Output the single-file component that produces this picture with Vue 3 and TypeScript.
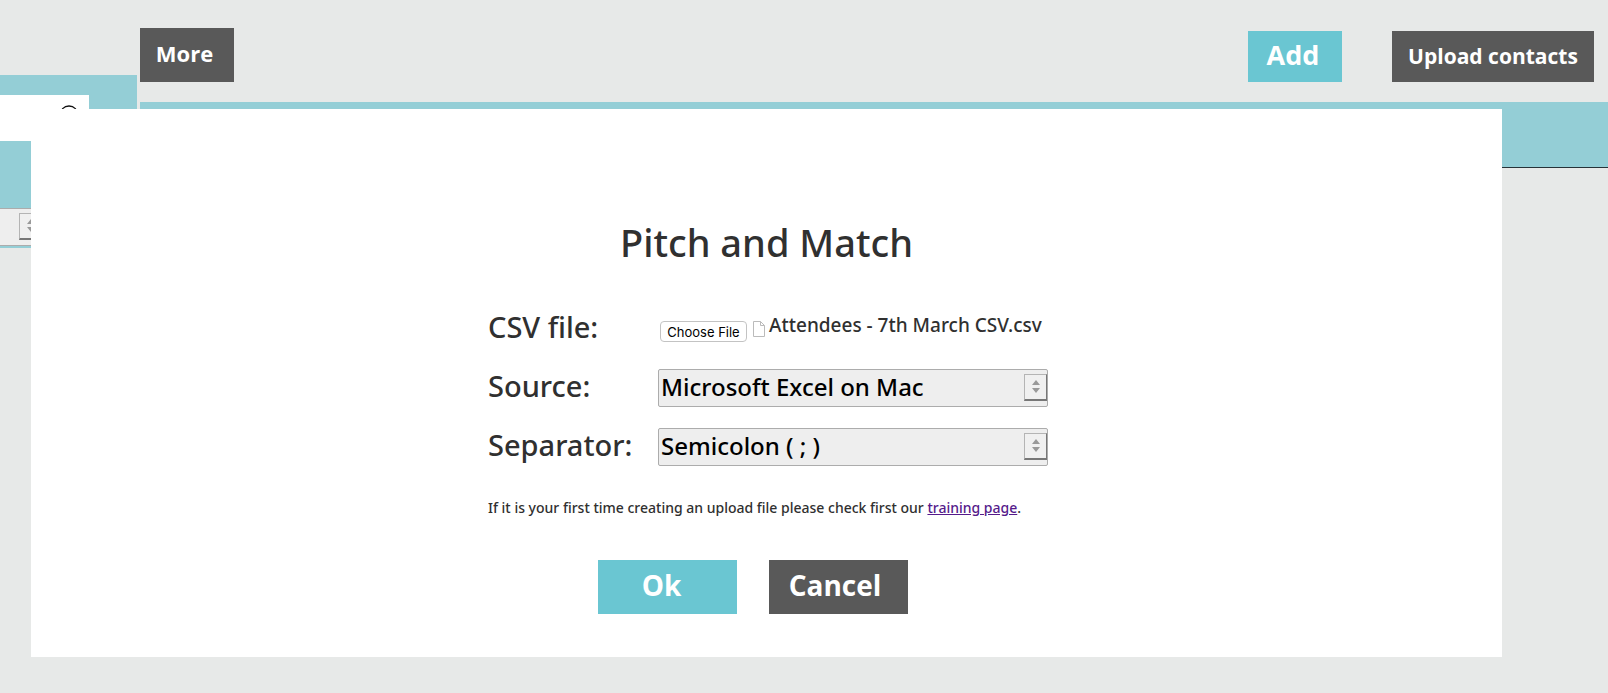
<script setup lang="ts">
import { ref } from 'vue'

const fileName = ref('Attendees - 7th March CSV.csv')
const source = ref('Microsoft Excel on Mac')
const separator = ref('Semicolon ( ; )')
const search = ref('')
const filter = ref('')

const sources: string[] = ['Microsoft Excel on Mac', 'Microsoft Excel on Windows', 'Other']
const separators: string[] = ['Semicolon ( ; )', 'Comma ( , )']

function onFile(event: Event): void {
  const file = (event.target as HTMLInputElement).files?.[0]
  if (file) fileName.value = file.name
}
</script>

<template>
  <div class="page">
    <aside class="sidebar">
      <div class="side-panel">
        <form class="search" @submit.prevent>
          <input v-model="search" class="search-input" type="search" aria-label="Search" />
          <button class="search-button" type="submit" aria-label="Search">
            <svg viewBox="0 0 24 24" width="24" height="24" aria-hidden="true">
              <circle cx="12" cy="10" r="9" fill="none" stroke="#111" stroke-width="1.3" />
              <path d="M18 17l5 6" stroke="#111" stroke-width="2" />
            </svg>
          </button>
        </form>
        <div class="select-wrap side-select">
          <select v-model="filter" aria-label="Filter"><option value=""></option></select>
          <span class="stepper" aria-hidden="true">
            <svg viewBox="0 0 8 14" width="8" height="14"><path d="M0 5l4-5 4 5zM0 8h8l-4 5z" fill="#999" /></svg>
          </span>
        </div>
      </div>
    </aside>

    <main class="main">
      <header class="toolbar">
        <button class="btn dark more" type="button">More</button>
        <button class="btn teal add" type="button">Add</button>
        <button class="btn dark upload" type="button">Upload contacts</button>
      </header>
      <div class="band"></div>
    </main>

    <section class="modal" role="dialog" aria-labelledby="dialog-title">
      <h1 id="dialog-title">Pitch and Match</h1>
      <form class="form" @submit.prevent>
        <div class="row">
          <label for="csv">CSV file:</label>
          <div class="file">
            <input id="csv" type="file" accept=".csv" @change="onFile" />
            <svg class="doc" viewBox="0 0 12 16" width="12" height="16" aria-hidden="true">
              <path d="M.5.5h7l4 4v11H.5zM7.500.5v4h4" fill="#fff" stroke="#bbb" />
            </svg>
            <span class="file-name">{{ fileName }}</span>
          </div>
        </div>
        <div class="row">
          <label for="source">Source:</label>
          <div class="select-wrap">
            <select id="source" v-model="source">
              <option v-for="s in sources" :key="s">{{ s }}</option>
            </select>
            <span class="stepper" aria-hidden="true">
              <svg viewBox="0 0 8 14" width="8" height="14"><path d="M0 5l4-5 4 5zM0 8h8l-4 5z" fill="#999" /></svg>
            </span>
          </div>
        </div>
        <div class="row">
          <label for="separator">Separator:</label>
          <div class="select-wrap">
            <select id="separator" v-model="separator">
              <option v-for="s in separators" :key="s">{{ s }}</option>
            </select>
            <span class="stepper" aria-hidden="true">
              <svg viewBox="0 0 8 14" width="8" height="14"><path d="M0 5l4-5 4 5zM0 8h8l-4 5z" fill="#999" /></svg>
            </span>
          </div>
        </div>
        <p class="note">
          If it is your first time creating an upload file please check first our <a href="#training">training page</a>.
        </p>
        <div class="actions">
          <button class="btn teal action ok" type="submit">Ok</button>
          <button class="btn dark action" type="button">Cancel</button>
        </div>
      </form>
    </section>
  </div>
</template>

<style>
body {
  background: #e7e9e8;
}
</style>

<style scoped>
.page,
.page * {
  box-sizing: border-box;
}
.page {
  position: relative;
  display: flex;
  gap: 3px;
  min-height: 100vh;
  overflow: hidden;
  background: #e7e9e8;
  color: #303030;
  font-family: 'Noto Sans', sans-serif;
  font-weight: 500;
}
.page button,
.page select,
.page input {
  font-family: inherit;
}
.sidebar {
  flex: 0 0 137px;
  padding-top: 75px;
}
.side-panel {
  padding: 20px 0 2px;
  background: #94ced6;
}
.search {
  display: flex;
  width: 89px;
  height: 46px;
  margin-bottom: 67px;
  background: #fff;
}
.search-input {
  flex: 1;
  min-width: 0;
  border: 0;
  padding: 0;
  background: transparent;
}
.search-button {
  display: flex;
  align-items: flex-start;
  width: 24px;
  margin-right: 8px;
  padding: 10px 0 0;
  border: 0;
  background: transparent;
}
.search-button svg {
  display: block;
}
.select-wrap {
  position: relative;
  display: flex;
}
.side-select {
  width: 43px;
}
.select-wrap select {
  width: 100%;
  height: 38px;
  padding: 0 26px 3px 2px;
  appearance: none;
  border: 1px solid #acacac;
  border-radius: 2px;
  background: #eee;
  color: #000;
  font-size: 24px;
  font-weight: 500;
  line-height: 34px;
}
.side-select select {
  border-left: 0;
  border-radius: 0;
}
.stepper {
  position: absolute;
  top: 5px;
  right: 1px;
  display: flex;
  align-items: center;
  justify-content: center;
  width: 23px;
  height: 27px;
  border: 1px solid #b4b4b4;
  border-right: 1px solid #777;
  border-bottom: 2px solid #777;
  background: #f0f0f0;
  pointer-events: none;
}
.main {
  flex: 1;
  min-width: 0;
}
.toolbar {
  display: flex;
  align-items: flex-end;
  height: 102px;
  padding: 0 14px 20px 0;
}
.page .btn {
  border: 0;
  color: #fff;
  font-family: 'Open Sans', sans-serif;
  font-weight: 700;
}
.dark {
  background: #595959;
}
.teal {
  background: #6ac6d2;
}
.more {
  width: 94px;
  height: 54px;
  padding: 0 5px 4px 0;
  font-size: 22px;
}
.add {
  width: 94px;
  height: 51px;
  margin: 0 50px 0 auto;
  padding: 0 4px 4px 0;
  font-size: 27px;
}
.upload {
  width: 202px;
  height: 51px;
  padding: 0 0 2px;
  font-size: 21px;
}
.band {
  height: 66px;
  border-bottom: 1px solid #263338;
  background: #94ced6;
}
.modal {
  position: absolute;
  top: 109px;
  left: 31px;
  right: 106px;
  padding: 105px 0 43px;
  background: #fff;
}
h1 {
  margin: 0;
  font-size: 38px;
  font-weight: 500;
  line-height: 56px;
  text-align: center;
}
.form {
  width: 563px;
  margin: 40px auto 0;
  padding-left: 3px;
}
.row {
  display: grid;
  grid-template-columns: 170px 1fr;
  align-items: center;
  height: 38px;
  margin-bottom: 21px;
}
.row label {
  padding-bottom: 4px;
  font-size: 29px;
  line-height: 34px;
}
.file {
  display: flex;
  align-items: center;
  padding-left: 2px;
}
.file input {
  width: 87px;
  height: 21px;
  margin-top: 5px;
  overflow: hidden;
  color: transparent;
  font-size: 13px;
}
.file input::file-selector-button {
  width: 87px;
  height: 21px;
  margin: 0;
  padding: 0;
  border: 1px solid #c3c3c3;
  border-radius: 4px;
  background: #fff;
  color: #000;
  font: 13px/18px Inter, sans-serif;
}
.doc {
  flex: none;
  margin: 0 4px 0 6px;
}
.file-name {
  font-size: 19px;
  line-height: 28px;
  padding-bottom: 8px;
  white-space: nowrap;
}
.note {
  margin: 30px 0 0;
  font-size: 14px;
  line-height: 24px;
  white-space: nowrap;
}
.note a {
  color: #551a8b;
}
.actions {
  display: flex;
  gap: 32px;
  margin: 40px 0 0 110px;
}
.action {
  width: 139px;
  height: 54px;
  padding: 0 7px 4px 0;
  font-size: 28px;
}
.ok {
  padding-right: 12px;
}
</style>
